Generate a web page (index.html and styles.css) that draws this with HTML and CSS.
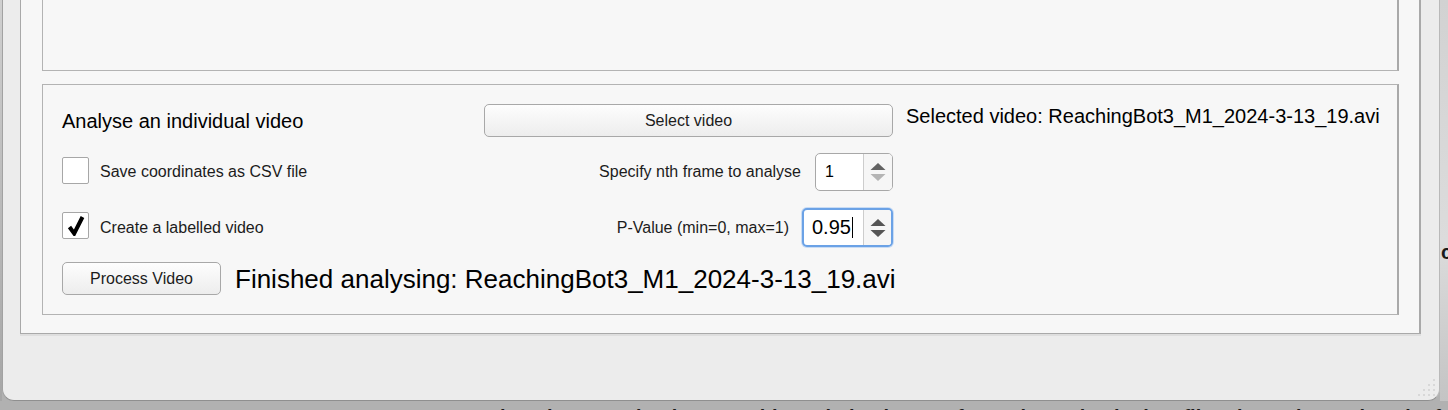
FILE: index.html
```html
<!DOCTYPE html>
<html lang="en">
<head>
<meta charset="utf-8">
<title>Analyse video</title>
<link rel="stylesheet" href="styles.css">
</head>
<body>
<div class="screen">
  <div class="top">
    <div class="leftedge"></div>
    <div class="window">
      <div class="outer">
        <div class="panel panel-top"></div>
        <div class="panel panel-main">
          <div class="row row1">
            <div class="left"><span class="title">Analyse an individual video</span></div>
            <div class="mid"><button class="btn btn-select">Select video</button></div>
            <div class="sel">Selected video: ReachingBot3_M1_2024-3-13_19.avi</div>
          </div>
          <div class="row row2">
            <div class="left">
              <span class="cb"></span>
              <span class="cb-label">Save coordinates as CSV file</span>
            </div>
            <div class="mid">
              <span class="spin-label">Specify nth frame to analyse</span>
              <div class="spin spin-n">
                <div class="spin-val">1</div>
                <div class="spin-arrows">
                  <svg width="16" height="18" viewBox="0 0 16 18"><polygon points="0.5,7 8,0 15.5,7" fill="#626262"/><polygon points="0.5,11 15.5,11 8,18" fill="#b4b4b4"/></svg>
                </div>
              </div>
            </div>
          </div>
          <div class="row row3">
            <div class="left">
              <span class="cb cb-checked">
                <svg width="18" height="21" viewBox="0 0 18 21"><path d="M2.5 12 L7.2 18.5 L15.5 2" fill="none" stroke="#000" stroke-width="4" stroke-linejoin="miter" stroke-linecap="butt"/></svg>
              </span>
              <span class="cb-label">Create a labelled video</span>
            </div>
            <div class="mid">
              <span class="spin-label">P-Value (min=0, max=1)</span>
              <div class="spin spin-p">
                <div class="spin-val spin-val-p">0.95<span class="caret"></span></div>
                <div class="spin-arrows">
                  <svg width="16" height="18" viewBox="0 0 16 18"><polygon points="0.5,7 8,0 15.5,7" fill="#555"/><polygon points="0.5,11 15.5,11 8,18" fill="#555"/></svg>
                </div>
              </div>
            </div>
          </div>
          <div class="row row4">
            <button class="btn btn-process">Process Video</button>
            <span class="finished">Finished analysing: ReachingBot3_M1_2024-3-13_19.avi</span>
          </div>
        </div>
      </div>
      <svg class="grip" width="22" height="22" viewBox="0 0 22 22">
        <g fill="#d2d2d2">
          <circle cx="19" cy="4" r="1"/>
          <circle cx="19" cy="9" r="1"/><circle cx="14" cy="9" r="1"/>
          <circle cx="19" cy="14" r="1"/><circle cx="14" cy="14" r="1"/><circle cx="9" cy="14" r="1"/>
          <circle cx="19" cy="19" r="1"/><circle cx="14" cy="19" r="1"/><circle cx="9" cy="19" r="1"/><circle cx="4" cy="19" r="1"/>
        </g>
      </svg>
    </div>
    <div class="side"><span class="side-text">co</span></div>
  </div>
  <div class="bottom"><span class="bottom-text">he box and the reaching behaviour of each animal is filmed and analysed for all of the fields</span></div>
</div>
</body>
</html>
```

FILE: styles.css
```css
* { box-sizing: border-box; }
html, body { margin: 0; padding: 0; }
body {
  width: 1448px;
  height: 410px;
  overflow: hidden;
  background: #b1b1b1;
  font-family: "Liberation Sans", Arial, sans-serif;
  color: #000;
}
.screen {
  width: 1448px;
  height: 410px;
  display: flex;
  flex-direction: column;
}
.top {
  display: flex;
  height: 401px;
}
.leftedge {
  width: 2px;
  background: linear-gradient(#cfcfcf, #a6a6a6);
}
.window {
  position: relative;
  width: 1438px;
  height: 401px;
  background: #ececec;
  border-left: 1px solid #a2a2a2;
  border-right: 1px solid #b9b9b9;
  border-bottom: 1px solid #8f8f8f;
  border-radius: 0 0 12px 12px;
  padding: 0 18px 0 17px;
}
.outer {
  background: #f7f7f7;
  border: 1px solid #a9a9a9;
  border-top: none;
  border-right-width: 2px;
  padding: 0 20px 18px 21px;
  box-shadow: 0 2px 0 #dedede;
}
.panel {
  background: #f7f7f7;
  border: 1px solid #b3b3b3;
  border-right: 2px solid #a9a9a9;
}
.panel-top {
  border-top: none;
  height: 71px;
}
.panel-main {
  margin-top: 13px;
  height: 231px;
  padding: 19px 0 0 19px;
  display: flex;
  flex-direction: column;
  gap: 16px;
}
.row {
  display: flex;
  align-items: center;
}
.row1 { height: 33px; }
.row2 { height: 38px; }
.row3 { height: 39px; margin-top: 1px; margin-bottom: -1px; }
.row4 { height: 33px; }
.left {
  width: 422px;
  display: flex;
  align-items: center;
}
.mid {
  width: 409px;
  height: 100%;
  display: flex;
  align-items: center;
  justify-content: flex-end;
}
.title {
  font-size: 20px;
  line-height: 24px;
  margin-top: 1px;
}
.sel {
  margin-left: 13px;
  align-self: flex-start;
  font-size: 20px;
  line-height: 24px;
  white-space: nowrap;
}
.btn {
  font-family: "Liberation Sans", Arial, sans-serif;
  font-size: 16px;
  color: #1c1c1c;
  height: 33px;
  border: 1px solid #a8a8a8;
  border-radius: 5px;
  background: linear-gradient(#fdfdfd, #ededed);
  padding: 0;
  margin: 0;
}
.btn-select { width: 409px; }
.btn-process { width: 159px; }
.cb {
  width: 27px;
  height: 27px;
  border: 1px solid #a7a7a7;
  border-radius: 2px;
  background: #fff;
  display: flex;
  align-items: center;
  justify-content: center;
  margin-bottom: 4px;
  flex: none;
}
.cb-checked svg { margin-left: 1px; }
.cb-label {
  margin-left: 11px;
  font-size: 16px;
  color: #1c1c1c;
}
.spin-label {
  font-size: 16px;
  color: #1c1c1c;
}
.spin {
  display: flex;
  height: 38px;
  background: #fff;
  border: 1px solid #a8a8a8;
  border-radius: 5px;
  overflow: hidden;
}
.spin-n {
  width: 78px;
  margin-left: 14px;
}
.spin-p {
  width: 91px;
  height: 39px;
  margin-left: 13px;
  border: 2px solid #6ba2e6;
  box-shadow: 0 0 0 1px #c9dcf4;
}
.spin-val {
  flex: 1;
  display: flex;
  align-items: center;
  padding-left: 9px;
  font-size: 16px;
  color: #000;
}
.spin-val-p {
  padding-left: 8px;
  font-size: 20px;
}
.caret {
  display: inline-block;
  width: 1px;
  height: 21px;
  background: #000;
  margin-left: 1px;
}
.spin-arrows {
  width: 29px;
  border-left: 1px solid #cdcdcd;
  background: #f6f6f6;
  display: flex;
  align-items: center;
  justify-content: center;
}
.spin-p .spin-arrows { width: 28px; }
.finished {
  margin-left: 14px;
  font-size: 26px;
  line-height: 30px;
  white-space: nowrap;
}
.grip {
  position: absolute;
  right: 2px;
  bottom: 2px;
}
.side {
  width: 8px;
  background: linear-gradient(#d2d2d2, #dcdcdc 60%, #c4c4c4);
  overflow: hidden;
  padding-top: 240px;
}
.side-text {
  display: block;
  font-size: 20px;
  font-weight: bold;
  color: #1a1a1a;
  white-space: nowrap;
  margin-left: 1px;
  line-height: 24px;
}
.bottom {
  height: 9px;
  overflow: hidden;
  background: #b1b1b1;
  padding-left: 500px;
}
.bottom-text {
  display: block;
  font-size: 20px;
  font-weight: bold;
  color: #1a1a1a;
  white-space: nowrap;
  line-height: 24px;
  margin-top: 4px;
  word-spacing: 18px;
}
```
